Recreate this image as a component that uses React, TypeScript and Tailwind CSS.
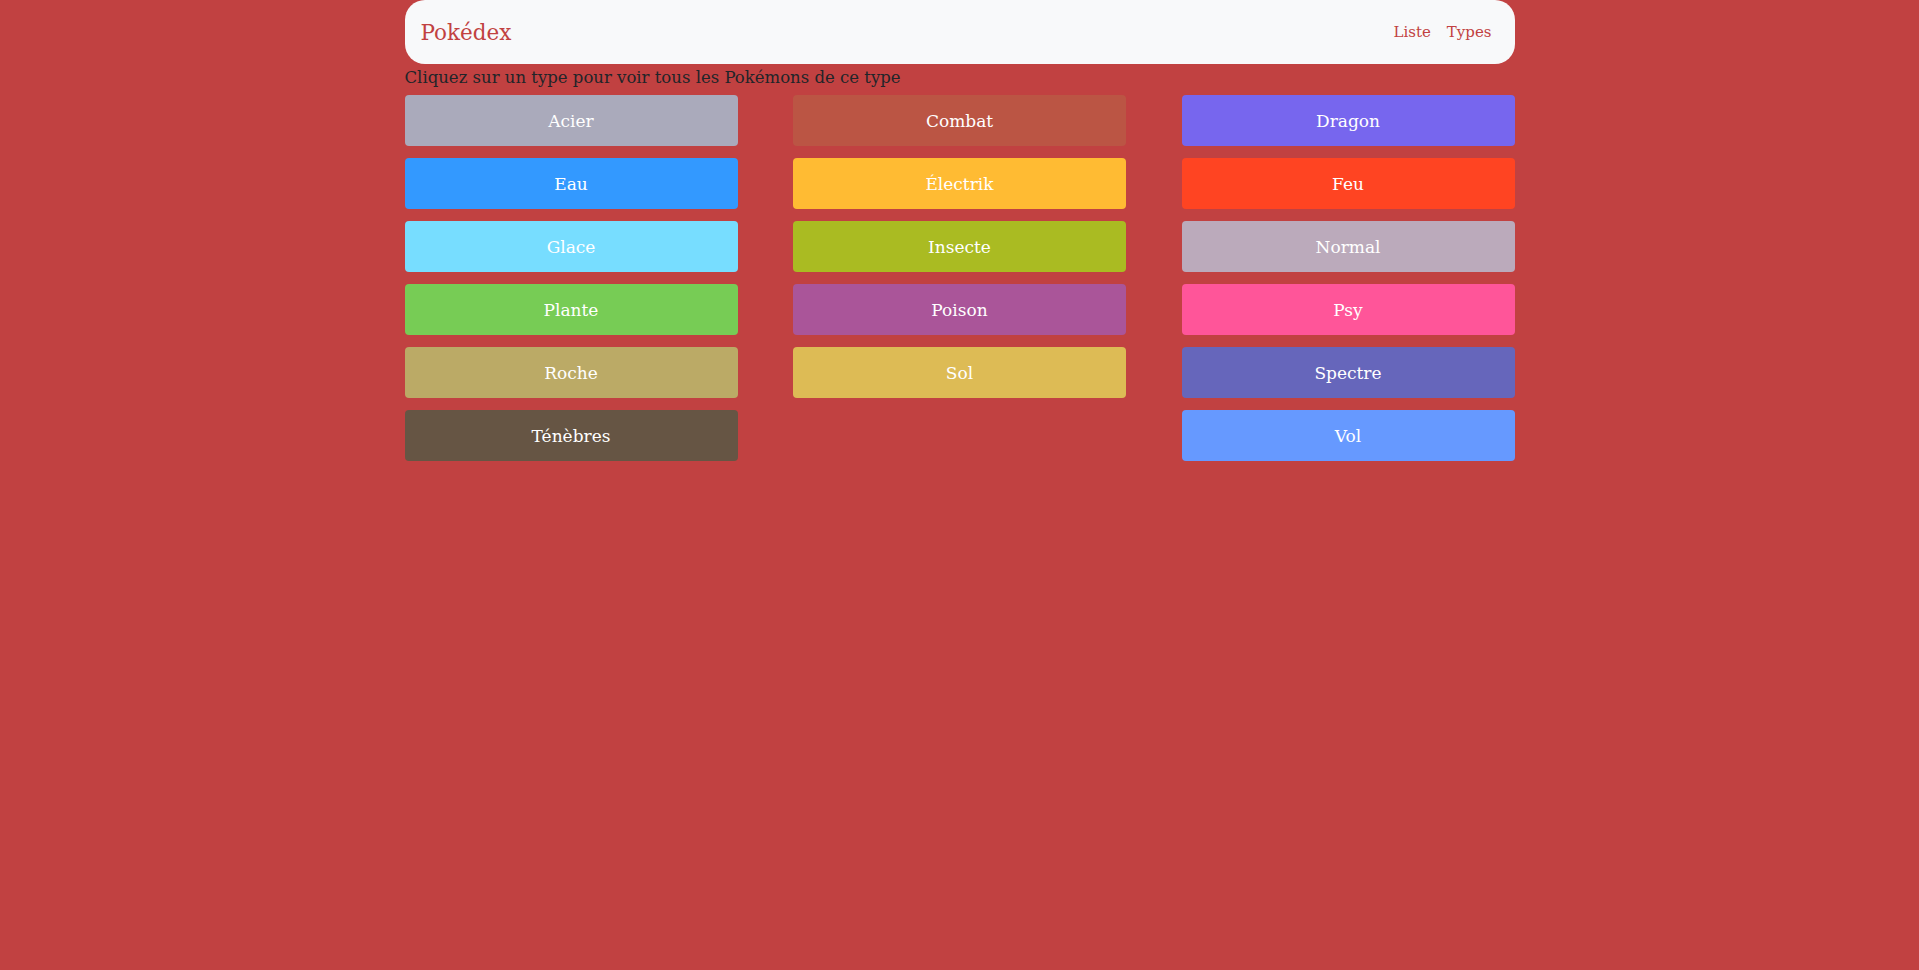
import React from "react";

const types: { name: string; bg: string }[] = [
  { name: "Acier", bg: "bg-[#aaaabb]" },
  { name: "Combat", bg: "bg-[#bb5544]" },
  { name: "Dragon", bg: "bg-[#7766ee]" },
  { name: "Eau", bg: "bg-[#3399ff]" },
  { name: "Électrik", bg: "bg-[#ffbb33]" },
  { name: "Feu", bg: "bg-[#ff4422]" },
  { name: "Glace", bg: "bg-[#77ddff]" },
  { name: "Insecte", bg: "bg-[#aabb22]" },
  { name: "Normal", bg: "bg-[#bbaabb]" },
  { name: "Plante", bg: "bg-[#77cc55]" },
  { name: "Poison", bg: "bg-[#aa5599]" },
  { name: "Psy", bg: "bg-[#ff5599]" },
  { name: "Roche", bg: "bg-[#bbaa66]" },
  { name: "Sol", bg: "bg-[#ddbb55]" },
  { name: "Spectre", bg: "bg-[#6666bb]" },
  { name: "Ténèbres", bg: "bg-[#665544]" },
  { name: "", bg: "" },
  { name: "Vol", bg: "bg-[#6699ff]" },
];

export default function App() {
  return (
    <div
      className="min-h-[970px] w-full bg-[#c14141] text-[#212529]"
      style={{ fontFamily: '"DejaVu Serif", serif' }}
    >
      <div className="mx-auto w-[1110px]">
        <header className="flex h-[64px] items-center justify-between rounded-[20px] bg-[#f8f9fa] pl-[16px] pr-[23px]">
          <span className="pt-[2px] text-[21.5px] text-[#c14141]">Pokédex</span>
          <nav className="flex gap-[16px] text-[15px] text-[#c14141]">
            <span>Liste</span>
            <span>Types</span>
          </nav>
        </header>
        <p className="text-[16.5px] leading-[27px]">
          Cliquez sur un type pour voir tous les Pokémons de ce type
        </p>
        <div className="mt-[4px] grid grid-cols-3 gap-x-[55.5px] gap-y-[12px]">
          {types.map((t, i) =>
            t.name ? (
              <div
                key={i}
                className={`flex h-[51px] items-center justify-center rounded-[4px] pt-[2px] text-[17px] text-white ${t.bg}`}
              >
                {t.name}
              </div>
            ) : (
              <div key={i} />
            )
          )}
        </div>
      </div>
    </div>
  );
}
